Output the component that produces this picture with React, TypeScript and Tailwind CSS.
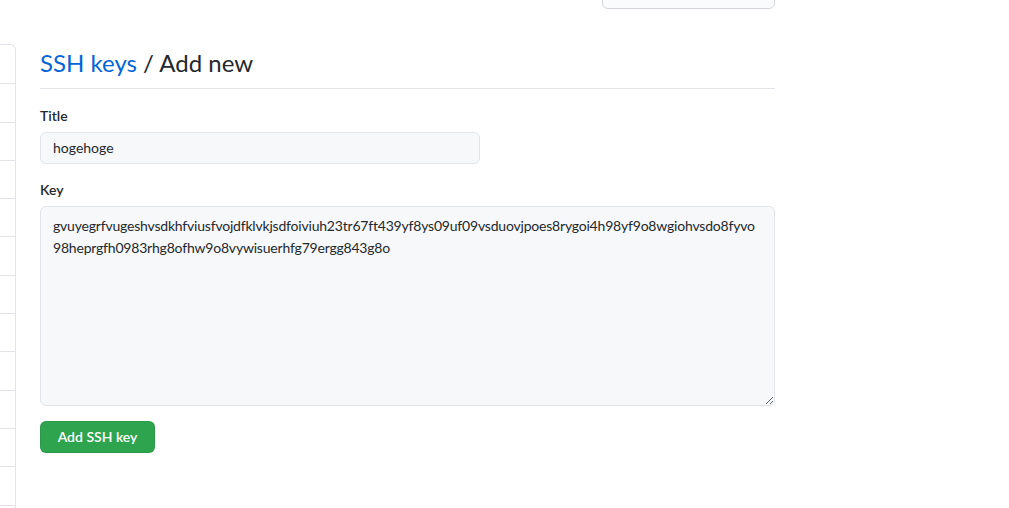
export default function App() {
  const keyText =
    "gvuyegrfvugeshvsdkhfviusfvojdfklvkjsdfoiviuh23tr67ft439yf8ys09uf09vsduovjpoes8rygoi4h98yf9o8wgiohvsdo8fyvo98heprgfh0983rhg8ofhw9o8vywisuerhfg79ergg843g8o";
  const font = { fontFamily: '"Segoe UI", Lato, "Noto Sans", sans-serif' };

  return (
    <div className="relative h-[508px] w-[1009px] overflow-hidden bg-white text-[#24292e]" style={font}>
      {/* top profile button (cut off) */}
      <div className="absolute left-[602px] top-[-22px] flex h-[31px] w-[173px] items-center justify-center rounded-md border border-[#d1d5da] bg-[#fafbfc] text-xs font-semibold">
        Go to your personal profile
      </div>

      <div className="flex pt-[44px]">
        {/* sidebar stub */}
        <div className="w-[16px] shrink-0">
          <div className="rounded-tr-md border border-l-0 border-[#e1e4e8]">
            {Array.from({ length: 13 }).map((_, i) => (
              <div key={i} className="h-[38.3px] border-t border-[#e1e4e8] first:border-t-0" />
            ))}
          </div>
        </div>

        {/* main */}
        <div className="ml-[24px] w-[735px]">
          <h2 className="border-b border-[#e1e4e8] pt-[1px] pb-[7px] text-[24px] leading-[36px] font-normal">
            <a className="text-[#0366d6]">SSH keys</a> / Add new
          </h2>

          <div className="mt-[17px]">
            <label className="block text-sm font-semibold leading-[20px]">Title</label>
            <div className="mt-[6px] flex h-[32px] w-[440px] items-center rounded-md border border-[#e1e4e8] bg-[#f6f8fa] px-[12px] text-sm">
              hogehoge
            </div>
          </div>

          <div className="mt-[16px]">
            <label className="block text-sm font-semibold leading-[20px]">Key</label>
            <textarea
              readOnly
              value={keyText}
              className="mt-[6px] block h-[200px] w-full rounded-md border border-[#e1e4e8] bg-[#f6f8fa] px-[12px] py-[8px] text-sm leading-[22px] tracking-[-0.2px] text-[#24292e] outline-none"
              style={font}
            />
          </div>

          <button className="mt-[15px] h-[32px] w-[115px] rounded-md border border-[#22863a]/30 bg-[#2ea44f] text-sm font-semibold text-white">
            Add SSH key
          </button>
        </div>
      </div>
    </div>
  );
}
